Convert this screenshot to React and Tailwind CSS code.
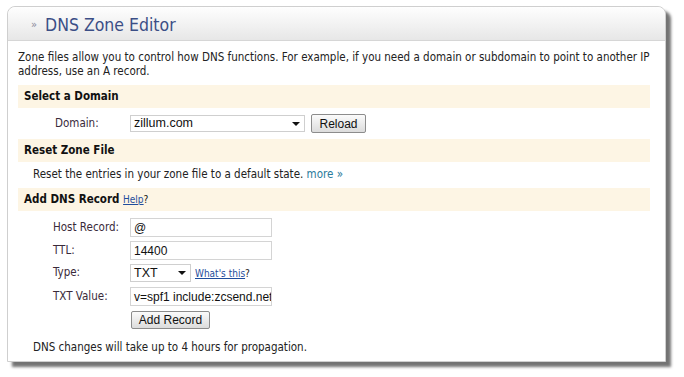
const FONT = "font-['DejaVu_Sans_Condensed','DejaVu_Sans',sans-serif]";
const INPUT_FONT = "font-['Liberation_Sans',Arial,sans-serif]";

function SectionBar({ children }) {
  return (
    <div className="h-[23px] flex items-center bg-[#fdf5e4] pl-[6px] text-[11.5px] font-bold text-[#111]">
      {children}
    </div>
  );
}

function Caret() {
  return <span className="w-0 h-0 border-l-[4px] border-r-[4px] border-t-[4px] border-l-transparent border-r-transparent border-t-[#111]" />;
}

function Field({ label, children, className = '' }) {
  return (
    <div className={`flex items-center ${className}`}>
      <span className="w-[77px] shrink-0 text-[#3a2a3a]">{label}</span>
      {children}
    </div>
  );
}

function TextBox({ value, w = 'w-[142px]' }) {
  return (
    <div className={`${w} h-[19px] border border-[#d4d4d4] bg-white flex items-center pl-[3px] overflow-hidden whitespace-nowrap text-[12px] text-[#111] ${INPUT_FONT}`}>
      {value}
    </div>
  );
}

function Button({ children, className = '' }) {
  return (
    <div className={`h-[18px] flex items-center justify-center border border-[#8c8c8c] rounded-[2px] bg-gradient-to-b from-[#fbfbfb] to-[#dcdcdc] text-[12px] text-[#111] ${INPUT_FONT} ${className}`}>
      {children}
    </div>
  );
}

export default function App() {
  return (
    <div className={`w-[684px] h-[377px] bg-white pl-[7px] pt-[6px] ${FONT}`}>
      <div className="w-[659px] h-[356px] border border-[#cfcfcf] rounded-t-[8px] bg-white shadow-[5px_5px_3px_rgba(0,0,0,0.55)] flex flex-col">
        <div className="h-[34px] shrink-0 flex items-center rounded-t-[8px] border-b border-[#d6d6d6] bg-gradient-to-b from-[#fefefe] to-[#e7e7e7] pl-[23px] pt-[3px]">
          <span className="text-[11px] text-[#8a8a9a] mr-[8px]">»</span>
          <span className="text-[17.5px] text-[#3b4e86]">DNS Zone Editor</span>
        </div>

        <div className="pl-[10px] pr-[15px] text-[11.5px] text-[#222]">
          <p className="pt-[9px] leading-[14px] mb-[7px]">
            Zone files allow you to control how DNS functions. For example, if you need a domain or subdomain to point to another IP address, use an A record.
          </p>

          <SectionBar>Select a Domain</SectionBar>
          <div className="h-[31px] flex items-center pl-[37px]">
            <span className="w-[75px] text-[#3a2a3a]">Domain:</span>
            <div className={`w-[175px] h-[17px] border border-[#cfcfcf] bg-white flex items-center justify-between pl-[3px] pr-[4px] text-[12.5px] text-[#111] ${INPUT_FONT}`}>
              zillum.com
              <Caret />
            </div>
            <Button className="w-[55px] ml-[6px] h-[19px]">Reload</Button>
          </div>

          <SectionBar>Reset Zone File</SectionBar>
          <div className="h-[26px] flex items-center pl-[15px]">
            Reset the entries in your zone file to a default state.&nbsp;<span className="text-[#2a7b9b]">more »</span>
          </div>

          <SectionBar>
            Add DNS Record&nbsp;
            <span className="font-normal text-[10px] text-[#1f4d9c] underline">Help</span>
            <span className="font-normal text-[10px]">?</span>
          </SectionBar>

          <div className="pl-[35px] pt-[7px] flex flex-col">
            <Field label="Host Record:">
              <TextBox value="@" />
            </Field>
            <Field label="TTL:" className="mt-[4px]">
              <TextBox value="14400" />
            </Field>
            <Field label="Type:" className="mt-[4px]">
              <div className={`w-[61px] h-[18px] border border-[#cfcfcf] bg-white flex items-center justify-between pl-[3px] pr-[4px] text-[12.5px] text-[#111] ${INPUT_FONT}`}>
                TXT
                <Caret />
              </div>
              <span className="ml-[4px] text-[10px] text-[#1f4d9c] underline">What's this</span>
              <span className="text-[10px]">?</span>
            </Field>
            <Field label="TXT Value:" className="mt-[5px]">
              <TextBox value="v=spf1 include:zcsend.net" />
            </Field>
            <div className="pl-[78px] mt-[5px]">
              <Button className="w-[79px]">Add Record</Button>
            </div>
          </div>

          <p className="pl-[15px] mt-[11px] leading-[14px]">DNS changes will take up to 4 hours for propagation.</p>
        </div>
      </div>
    </div>
  );
}
